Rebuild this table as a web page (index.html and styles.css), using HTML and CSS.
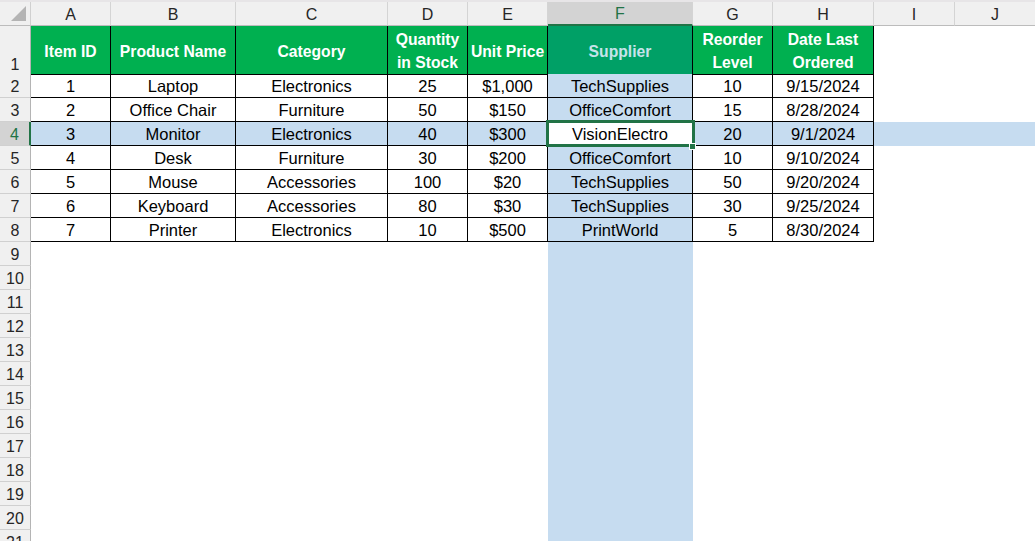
FILE: index.html
```html
<!DOCTYPE html>
<html lang="en">
<head>
<meta charset="utf-8">
<title>Inventory</title>
<link rel="stylesheet" href="styles.css">
</head>
<body>
<div class="sheet">
  <div class="row colhead">
    <div class="corner"><svg width="16" height="16" viewBox="0 0 16 16"><polygon points="15,0 15,15 0,15" fill="#b4b4b4"/></svg></div>
    <div class="ch">A</div><div class="ch">B</div><div class="ch">C</div><div class="ch">D</div><div class="ch">E</div>
    <div class="ch act">F</div><div class="ch">G</div><div class="ch">H</div><div class="ch">I</div><div class="ch">J</div>
  </div>
  <div class="row r1">
    <div class="rh bottom">1</div>
    <div class="h">Item ID</div>
    <div class="h">Product Name</div>
    <div class="h">Category</div>
    <div class="h">Quantity<br>in Stock</div>
    <div class="h">Unit Price</div>
    <div class="h selh">Supplier</div>
    <div class="h">Reorder<br>Level</div>
    <div class="h">Date Last<br>Ordered</div>
    <div class="e span2"></div>
  </div>
  <div class="row">
    <div class="rh">2</div><div class="c">1</div><div class="c">Laptop</div><div class="c">Electronics</div><div class="c">25</div><div class="c">$1,000</div><div class="c sel">TechSupplies</div><div class="c">10</div><div class="c">9/15/2024</div><div class="e span2"></div>
  </div>
  <div class="row">
    <div class="rh">3</div><div class="c">2</div><div class="c">Office Chair</div><div class="c">Furniture</div><div class="c">50</div><div class="c">$150</div><div class="c sel">OfficeComfort</div><div class="c">15</div><div class="c">8/28/2024</div><div class="e span2"></div>
  </div>
  <div class="row r4">
    <div class="rh act">4</div><div class="c">3</div><div class="c">Monitor</div><div class="c">Electronics</div><div class="c">40</div><div class="c">$300</div><div class="c active">VisionElectro</div><div class="c">20</div><div class="c">9/1/2024</div><div class="e span2 sel"></div>
  </div>
  <div class="row">
    <div class="rh">5</div><div class="c">4</div><div class="c">Desk</div><div class="c">Furniture</div><div class="c">30</div><div class="c">$200</div><div class="c sel">OfficeComfort</div><div class="c">10</div><div class="c">9/10/2024</div><div class="e span2"></div>
  </div>
  <div class="row">
    <div class="rh">6</div><div class="c">5</div><div class="c">Mouse</div><div class="c">Accessories</div><div class="c">100</div><div class="c">$20</div><div class="c sel">TechSupplies</div><div class="c">50</div><div class="c">9/20/2024</div><div class="e span2"></div>
  </div>
  <div class="row">
    <div class="rh">7</div><div class="c">6</div><div class="c">Keyboard</div><div class="c">Accessories</div><div class="c">80</div><div class="c">$30</div><div class="c sel">TechSupplies</div><div class="c">30</div><div class="c">9/25/2024</div><div class="e span2"></div>
  </div>
  <div class="row">
    <div class="rh">8</div><div class="c">7</div><div class="c">Printer</div><div class="c">Electronics</div><div class="c">10</div><div class="c">$500</div><div class="c sel">PrintWorld</div><div class="c">5</div><div class="c">8/30/2024</div><div class="e span2"></div>
  </div>
  <div class="row"><div class="rh">9</div><div class="e span5"></div><div class="e sel"></div><div class="e span4"></div></div>
  <div class="row"><div class="rh">10</div><div class="e span5"></div><div class="e sel"></div><div class="e span4"></div></div>
  <div class="row"><div class="rh">11</div><div class="e span5"></div><div class="e sel"></div><div class="e span4"></div></div>
  <div class="row"><div class="rh">12</div><div class="e span5"></div><div class="e sel"></div><div class="e span4"></div></div>
  <div class="row"><div class="rh">13</div><div class="e span5"></div><div class="e sel"></div><div class="e span4"></div></div>
  <div class="row"><div class="rh">14</div><div class="e span5"></div><div class="e sel"></div><div class="e span4"></div></div>
  <div class="row"><div class="rh">15</div><div class="e span5"></div><div class="e sel"></div><div class="e span4"></div></div>
  <div class="row"><div class="rh">16</div><div class="e span5"></div><div class="e sel"></div><div class="e span4"></div></div>
  <div class="row"><div class="rh">17</div><div class="e span5"></div><div class="e sel"></div><div class="e span4"></div></div>
  <div class="row"><div class="rh">18</div><div class="e span5"></div><div class="e sel"></div><div class="e span4"></div></div>
  <div class="row"><div class="rh">19</div><div class="e span5"></div><div class="e sel"></div><div class="e span4"></div></div>
  <div class="row"><div class="rh">20</div><div class="e span5"></div><div class="e sel"></div><div class="e span4"></div></div>
  <div class="row"><div class="rh">21</div><div class="e span5"></div><div class="e sel"></div><div class="e span4"></div></div>
</div>
</body>
</html>
```
FILE: styles.css
```css
html, body {
  margin: 0;
  padding: 0;
  background: #ffffff;
}
body {
  font-family: "Liberation Sans", Arial, sans-serif;
  font-size: 16.5px;
  color: #000;
  overflow: hidden;
}
.sheet {
  width: 1035px;
  height: 541px;
  overflow: hidden;
}
.row {
  display: grid;
  grid-template-columns: 31px 80px 125px 152px 80px 80px 145px 80px 101px 81px 81px;
  height: 24px;
}
.row > div {
  box-sizing: border-box;
  display: flex;
  align-items: center;
  justify-content: center;
  text-align: center;
  white-space: nowrap;
}
.colhead {
  box-sizing: border-box;
  height: 26px;
  border-top: 2px solid #e7e5e7;
  background: #f0f0f0;
}
.corner {
  border-right: 1px solid #d0d0d0;
  border-bottom: 1px solid #bcbcbc;
  padding: 0 3px 3px 0;
  justify-content: flex-end !important;
  align-items: flex-end !important;
}
.ch {
  font-size: 16px;
  color: #262626;
  padding-top: 2px;
  border-right: 1px solid #d4d4d4;
  border-bottom: 1px solid #bcbcbc;
}
.ch.act {
  background: #d3d3d3;
  color: #217346;
  border-bottom: 2px solid #217346;
}
.rh {
  font-size: 16px;
  color: #262626;
  background: #f0f0f0;
  padding-top: 2px;
  border-right: 1px solid #b4b4b4;
  border-bottom: 1px solid #d0d0d0;
}
.rh.bottom {
  align-items: flex-end !important;
  padding-bottom: 0;
}
.rh.act {
  background: #d3d3d3;
  color: #217346;
  border-right: 2px solid #217346;
}
.r1 {
  height: 48px;
}
.h {
  background: #00b050;
  color: #ffffff;
  font-weight: bold;
  font-size: 15.7px;
  line-height: 23px;
  padding-top: 2px;
  border-right: 1px solid #000;
  border-bottom: 1px solid #000;
}
.h.selh {
  background: #00a066;
  color: #c6e3ea;
}
.c {
  padding-top: 2px;
  border-right: 1px solid #000;
  border-bottom: 1px solid #000;
}
.span2 { grid-column: span 2; }
.span4 { grid-column: span 4; }
.span5 { grid-column: span 5; }
.sel, .r4 .c {
  background: #c6dcf0;
}
.r4 .c.active {
  background: #ffffff;
  position: relative;
}
.active::after {
  content: "";
  position: absolute;
  left: -2px;
  top: -2px;
  width: 149px;
  height: 27px;
  box-sizing: border-box;
  border: 3px solid #217346;
}
.active::before {
  content: "";
  position: absolute;
  left: 141px;
  top: 21px;
  width: 5px;
  height: 5px;
  background: #217346;
  border: 1px solid #ffffff;
  z-index: 2;
}
```
